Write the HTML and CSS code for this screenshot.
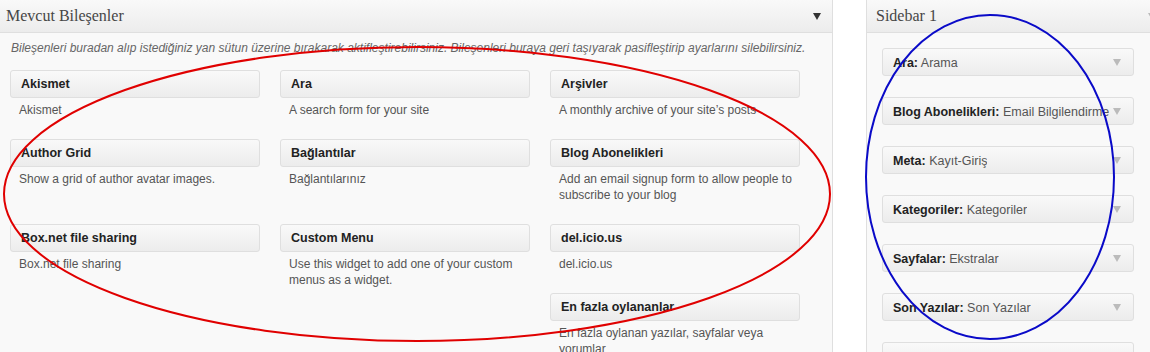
FILE: index.html
```html
<!DOCTYPE html>
<html lang="tr">
<head>
<meta charset="utf-8">
<title>Bileşenler</title>
<link rel="stylesheet" href="styles.css">
</head>
<body>
<div class="page">
  <section class="panel panel-main">
    <header class="panel-head">
      <h3 class="panel-title">Mevcut Bileşenler</h3>
      <svg class="arrow arrow-dark" width="8" height="7" viewBox="0 0 8 7"><polygon points="0,0 8,0 4,7"/></svg>
    </header>
    <p class="panel-desc">Bileşenleri buradan alıp istediğiniz yan sütun üzerine bırakarak aktifleştirebilirsiniz. Bileşenleri buraya geri taşıyarak pasifleştirip ayarlarını silebilirsiniz.</p>
    <div class="widget-list">
      <div class="widget"><div class="widget-title">Akismet</div><div class="widget-desc">Akismet</div></div>
      <div class="widget"><div class="widget-title">Ara</div><div class="widget-desc">A search form for your site</div></div>
      <div class="widget"><div class="widget-title">Arşivler</div><div class="widget-desc">A monthly archive of your site’s posts</div></div>
      <div class="widget"><div class="widget-title">Author Grid</div><div class="widget-desc">Show a grid of author avatar images.</div></div>
      <div class="widget"><div class="widget-title">Bağlantılar</div><div class="widget-desc">Bağlantılarınız</div></div>
      <div class="widget"><div class="widget-title">Blog Abonelikleri</div><div class="widget-desc">Add an email signup form to allow people to subscribe to your blog</div></div>
      <div class="widget"><div class="widget-title">Box.net file sharing</div><div class="widget-desc">Box.net file sharing</div></div>
      <div class="widget"><div class="widget-title">Custom Menu</div><div class="widget-desc">Use this widget to add one of your custom menus as a widget.</div></div>
      <div class="widget"><div class="widget-title">del.icio.us</div><div class="widget-desc">del.icio.us</div></div>
      <div class="widget"><div class="widget-title">En fazla oylananlar</div><div class="widget-desc">En fazla oylanan yazılar, sayfalar veya yorumlar</div></div>
    </div>
  </section>

  <section class="panel panel-side">
    <header class="panel-head">
      <h3 class="panel-title">Sidebar 1</h3>
      <svg class="arrow arrow-light" width="8" height="7" viewBox="0 0 8 7"><polygon points="0,0 8,0 4,7"/></svg>
    </header>
    <div class="side-list">
      <div class="side-widget"><span class="sw-name"><b>Ara:</b> Arama</span><svg class="arrow arrow-light" width="8" height="7" viewBox="0 0 8 7"><polygon points="0,0 8,0 4,7"/></svg></div>
      <div class="side-widget"><span class="sw-name"><b>Blog Abonelikleri:</b> Email Bilgilendirme</span><svg class="arrow arrow-light" width="8" height="7" viewBox="0 0 8 7"><polygon points="0,0 8,0 4,7"/></svg></div>
      <div class="side-widget"><span class="sw-name"><b>Meta:</b> Kayıt-Giriş</span><svg class="arrow arrow-light" width="8" height="7" viewBox="0 0 8 7"><polygon points="0,0 8,0 4,7"/></svg></div>
      <div class="side-widget"><span class="sw-name"><b>Kategoriler:</b> Kategoriler</span><svg class="arrow arrow-light" width="8" height="7" viewBox="0 0 8 7"><polygon points="0,0 8,0 4,7"/></svg></div>
      <div class="side-widget"><span class="sw-name"><b>Sayfalar:</b> Ekstralar</span><svg class="arrow arrow-light" width="8" height="7" viewBox="0 0 8 7"><polygon points="0,0 8,0 4,7"/></svg></div>
      <div class="side-widget"><span class="sw-name"><b>Son Yazılar:</b> Son Yazılar</span><svg class="arrow arrow-light" width="8" height="7" viewBox="0 0 8 7"><polygon points="0,0 8,0 4,7"/></svg></div>
      <div class="side-widget"></div>
    </div>
  </section>

  <svg class="annotations" width="1150" height="352" viewBox="0 0 1150 352">
    <ellipse cx="417" cy="194" rx="413" ry="147" fill="none" stroke="#e00000" stroke-width="2"/>
    <ellipse cx="990" cy="177" rx="124" ry="162" fill="none" stroke="#0a0ac8" stroke-width="2"/>
  </svg>
</div>
</body>
</html>
```

FILE: styles.css
```css
* { box-sizing: border-box; }
html, body { margin: 0; padding: 0; background: #fff; }
body {
  font-family: "Liberation Sans", Arial, sans-serif;
  font-size: 12px;
  color: #333;
  overflow: hidden;
}
.page {
  position: relative;
  display: flex;
  gap: 33px;
  width: 1150px;
  height: 352px;
  overflow: hidden;
}
.panel {
  background: #f9f9f9;
  border-right: 1px solid #dfdfdf;
  height: 352px;
  flex: none;
}
.panel-main { width: 833px; }
.panel-side { width: 300px; border-left: 1px solid #dfdfdf; }

.panel-head {
  height: 33px;
  display: flex;
  align-items: center;
  justify-content: space-between;
  background: linear-gradient(#f9f9f9, #ececec);
  border-bottom: 1px solid #dfdfdf;
  padding: 0 11px 0 6px;
}
.panel-side .panel-head { padding: 0 9px 0 9px; }
.panel-title {
  margin: 0;
  font-family: "Liberation Serif", "Times New Roman", serif;
  font-weight: normal;
  font-size: 16px;
  color: #464646;
}
.arrow { display: block; flex: none; }
.arrow-dark { fill: #333; }
.arrow-light { fill: #bbb; }

.panel-desc {
  margin: 7px 0 0;
  padding-left: 11px;
  font-style: italic;
  line-height: 16px;
  color: #666;
  white-space: nowrap;
}
.widget-list {
  padding: 14px 0 0 10px;
}
.widget-list::after { content: ""; display: block; clear: both; }
.widget {
  float: left;
  width: 250px;
  margin-right: 20px;
}
.widget-title {
  height: 28px;
  line-height: 26px;
  padding: 0 10px;
  background: linear-gradient(#f9f9f9, #ececec);
  border: 1px solid #dfdfdf;
  border-radius: 3px;
  font-weight: bold;
  font-size: 12.5px;
  color: #222;
}
.widget-desc {
  padding: 4px 4px 0 9px;
  margin-bottom: 21px;
  line-height: 16px;
  color: #555;
}

.side-list {
  padding: 15px 0 0 15px;
}
.side-widget {
  width: 252px;
  height: 28px;
  margin-bottom: 21px;
  display: flex;
  align-items: center;
  justify-content: space-between;
  padding: 1px 12px 0 10px;
  background: linear-gradient(#f9f9f9, #ececec);
  border: 1px solid #dfdfdf;
  border-radius: 3px;
  font-size: 12.5px;
  color: #555;
  white-space: nowrap;
  overflow: hidden;
}
.sw-name { overflow: hidden; }
.sw-name b { color: #222; }

.annotations {
  position: absolute;
  left: 0;
  top: 0;
  pointer-events: none;
}
```
